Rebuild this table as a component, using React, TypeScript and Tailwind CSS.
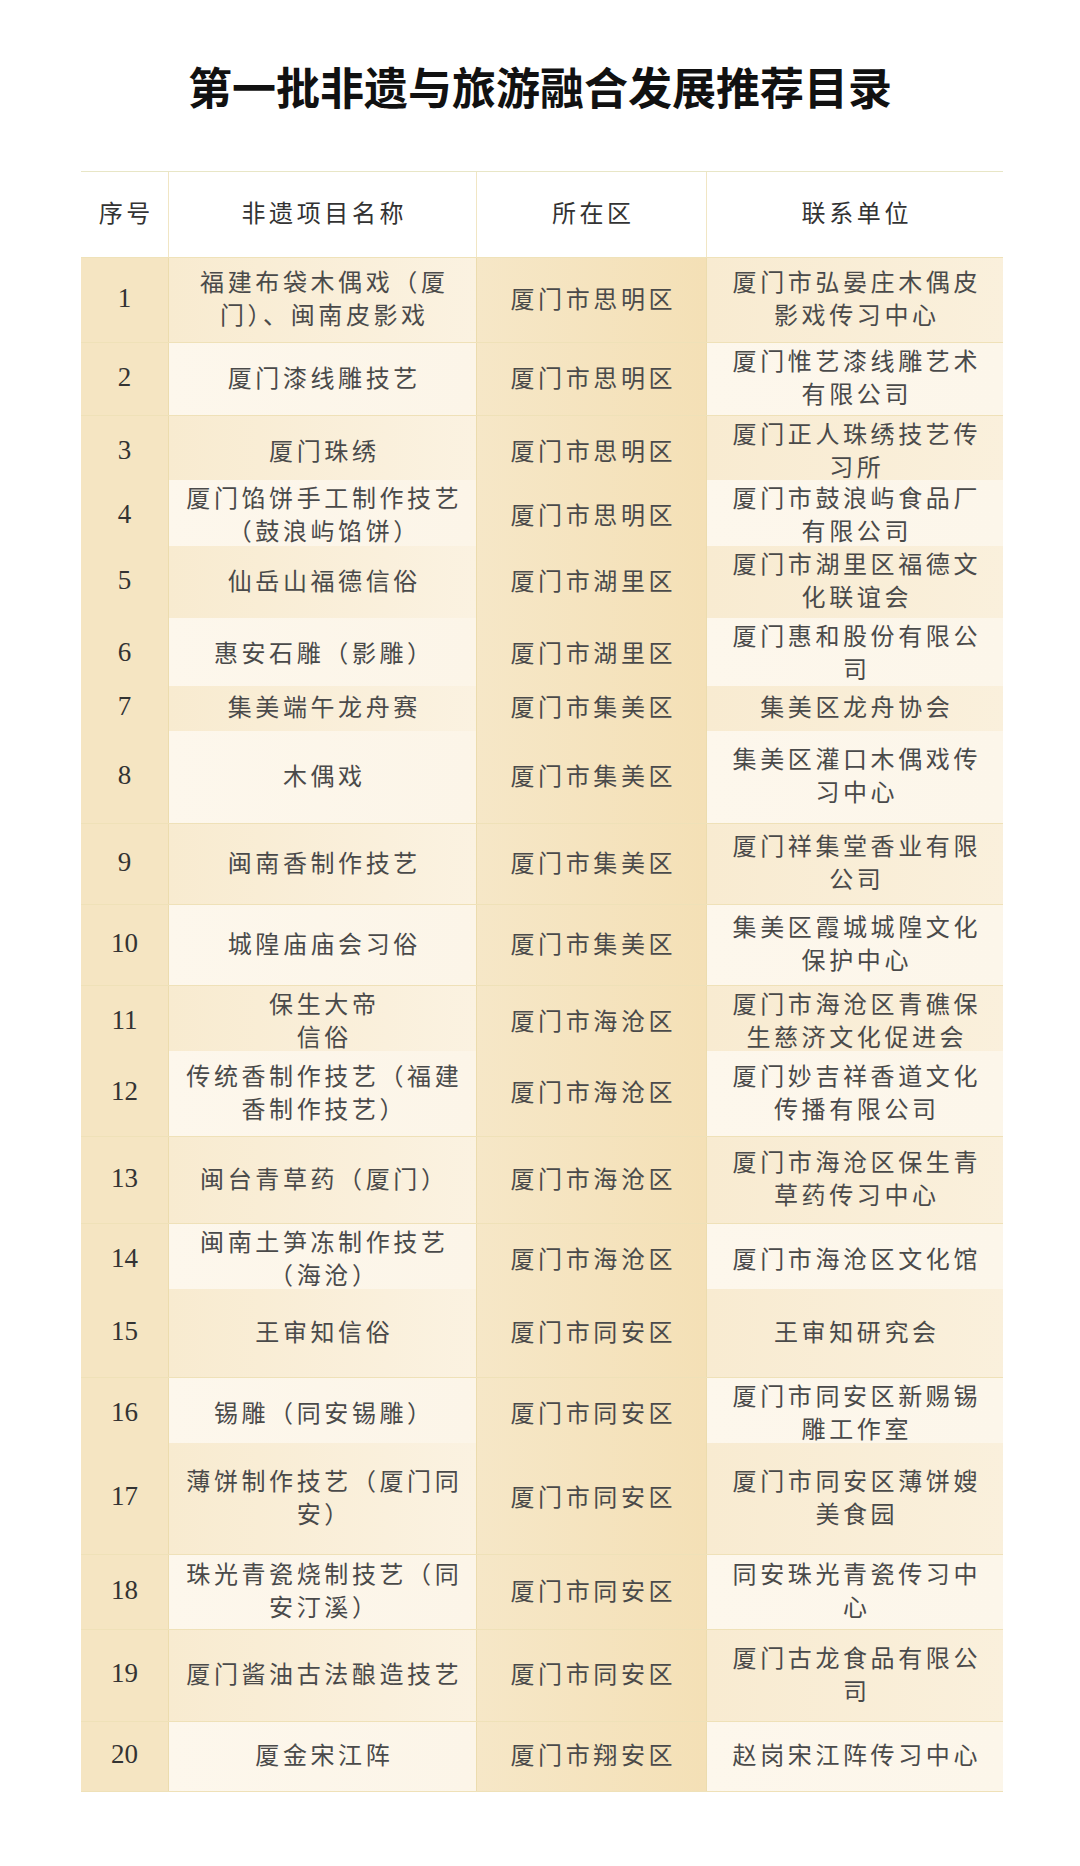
import React from "react";

type Row = {
  no: string;
  name: string;
  district: string;
  unit: string;
  h: string;
};

// line breaks follow the source table
const rows: Row[] = [
  { no: "1", name: "福建布袋木偶戏（厦\n门）、闽南皮影戏", district: "厦门市思明区", unit: "厦门市弘晏庄木偶皮\n影戏传习中心", h: "h-[85px]" },
  { no: "2", name: "厦门漆线雕技艺", district: "厦门市思明区", unit: "厦门惟艺漆线雕艺术\n有限公司", h: "h-[73px]" },
  { no: "3", name: "厦门珠绣", district: "厦门市思明区", unit: "厦门正人珠绣技艺传\n习所", h: "h-[64px]" },
  { no: "4", name: "厦门馅饼手工制作技艺\n（鼓浪屿馅饼）", district: "厦门市思明区", unit: "厦门市鼓浪屿食品厂\n有限公司", h: "h-[66px]" },
  { no: "5", name: "仙岳山福德信俗", district: "厦门市湖里区", unit: "厦门市湖里区福德文\n化联谊会", h: "h-[72px]" },
  { no: "6", name: "惠安石雕（影雕）", district: "厦门市湖里区", unit: "厦门惠和股份有限公\n司", h: "h-[68px]" },
  { no: "7", name: "集美端午龙舟赛", district: "厦门市集美区", unit: "集美区龙舟协会", h: "h-[45px]" },
  { no: "8", name: "木偶戏", district: "厦门市集美区", unit: "集美区灌口木偶戏传\n习中心", h: "h-[93px]" },
  { no: "9", name: "闽南香制作技艺", district: "厦门市集美区", unit: "厦门祥集堂香业有限\n公司", h: "h-[81px]" },
  { no: "10", name: "城隍庙庙会习俗", district: "厦门市集美区", unit: "集美区霞城城隍文化\n保护中心", h: "h-[81px]" },
  { no: "11", name: "保生大帝\n信俗", district: "厦门市海沧区", unit: "厦门市海沧区青礁保\n生慈济文化促进会", h: "h-[65px]" },
  { no: "12", name: "传统香制作技艺（福建\n香制作技艺）", district: "厦门市海沧区", unit: "厦门妙吉祥香道文化\n传播有限公司", h: "h-[86px]" },
  { no: "13", name: "闽台青草药（厦门）", district: "厦门市海沧区", unit: "厦门市海沧区保生青\n草药传习中心", h: "h-[87px]" },
  { no: "14", name: "闽南土笋冻制作技艺\n（海沧）", district: "厦门市海沧区", unit: "厦门市海沧区文化馆", h: "h-[65px]" },
  { no: "15", name: "王审知信俗", district: "厦门市同安区", unit: "王审知研究会", h: "h-[89px]" },
  { no: "16", name: "锡雕（同安锡雕）", district: "厦门市同安区", unit: "厦门市同安区新赐锡\n雕工作室", h: "h-[65px]" },
  { no: "17", name: "薄饼制作技艺（厦门同\n安）", district: "厦门市同安区", unit: "厦门市同安区薄饼嫂\n美食园", h: "h-[112px]" },
  { no: "18", name: "珠光青瓷烧制技艺（同\n安汀溪）", district: "厦门市同安区", unit: "同安珠光青瓷传习中\n心", h: "h-[75px]" },
  { no: "19", name: "厦门酱油古法酿造技艺", district: "厦门市同安区", unit: "厦门古龙食品有限公\n司", h: "h-[92px]" },
  { no: "20", name: "厦金宋江阵", district: "厦门市翔安区", unit: "赵岗宋江阵传习中心", h: "h-[70px]" },
];

const cjk = "font-['Noto_Sans_CJK_SC',sans-serif]";
const cellText =
  "whitespace-pre-line text-center text-[24px] leading-[33px] tracking-[3.6px] pl-[3.6px] pb-[6px] text-[#4a4a4a]";

function Cell({ className, children }: { className: string; children: React.ReactNode }) {
  return (
    <div className={`flex items-center justify-center border-r border-[#ecdcae] ${className}`}>
      {children}
    </div>
  );
}

export default function App() {
  return (
    <div className={`min-h-[1866px] w-[1080px] bg-white ${cjk}`}>
      <h1 className="pt-[64px] text-center text-[44px] font-bold leading-[44px] text-[#111]">
        第一批非遗与旅游融合发展推荐目录
      </h1>

      <div className="ml-[81px] mt-[63px] w-[922px] border-t border-[#e8e6c6]">
        <div className="grid h-[86px] grid-cols-[88px_308px_230px_296px] border-b border-[#efe2b9] bg-white">
          <Cell className="border-[#f1e6c4]">
            <span className={`${cellText} text-[#333]`}>序号</span>
          </Cell>
          <Cell className="border-[#f1e6c4]">
            <span className={`${cellText} text-[#333]`}>非遗项目名称</span>
          </Cell>
          <Cell className="border-[#f1e6c4]">
            <span className={`${cellText} text-[#333]`}>所在区</span>
          </Cell>
          <div className="flex items-center justify-center">
            <span className={`${cellText} text-[#333]`}>联系单位</span>
          </div>
        </div>

        {rows.map((r, i) => {
          const odd = i % 2 === 0;
          return (
            <div
              key={r.no}
              className={`grid grid-cols-[88px_308px_230px_296px] border-b border-[#efe1b8] ${r.h}`}
            >
              <Cell className="bg-[#f5e5c2]">
                <span className="pb-[4px] font-['Liberation_Serif',serif] text-[27px] text-[#333]">{r.no}</span>
              </Cell>
              <Cell
                className={
                  odd
                    ? "bg-gradient-to-r from-[#f8ebd0] to-[#fbf2e1]"
                    : "bg-gradient-to-r from-[#fdf7ec] to-[#fcf5e8]"
                }
              >
                <span className={cellText}>{r.name}</span>
              </Cell>
              <Cell className="bg-gradient-to-r from-[#f6e7c7] to-[#f4e0b6]">
                <span className={cellText}>{r.district}</span>
              </Cell>
              <div
                className={`flex items-center justify-center ${
                  odd
                    ? "bg-gradient-to-r from-[#f8ebd1] to-[#faf0dc]"
                    : "bg-gradient-to-r from-[#fdf7ec] to-[#fcf6ea]"
                }`}
              >
                <span className={cellText}>{r.unit}</span>
              </div>
            </div>
          );
        })}
      </div>
    </div>
  );
}
